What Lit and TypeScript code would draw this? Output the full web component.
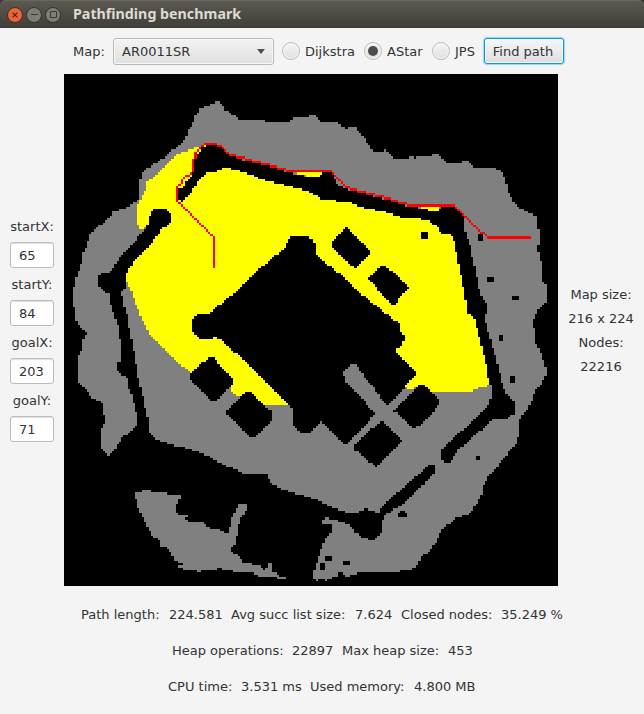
import { LitElement, html, css, svg } from "lit";
import { customElement, property } from "lit/decorators.js";
import { classMap } from "lit/directives/class-map.js";
import { styleMap } from "lit/directives/style-map.js";

const COLS = 216;
const ROWS = 224;
// Outlines are kept on a fine lattice and sampled at every cell centre.
const UNIT_X = 1482 / COLS;
const UNIT_Y = 1536 / ROWS;

const GROUND = `455,84 465,84 480,95 480,108 493,112 515,130 530,138 603,138 605,144 618,148 630,144 672,143 694,130 735,128 737,122 752,122 760,132 767,143 815,145 830,152 845,163 858,160 877,159 883,172 905,198 912,210 932,234 958,234 963,226 968,234 988,252 1035,253 1038,247 1057,252 1062,247 1100,246 1106,240 1124,240 1138,260 1155,267 1190,266 1196,261 1212,262 1228,280 1295,283 1310,288 1325,315 1332,350 1350,385 1372,404 1400,418 1418,428 1420,465 1426,470 1426,508 1420,518 1428,550 1436,580 1437,625 1446,630 1446,685 1425,703 1407,740 1412,775 1413,800 1427,830 1438,860 1446,885 1446,905 1432,930 1418,945 1400,985 1388,1010 1376,1020 1365,1040 1364,1080 1354,1115 1337,1132 1312,1160 1297,1185 1272,1205 1257,1235 1252,1265 1237,1290 1220,1318 1182,1330 1162,1342 1137,1365 1117,1400 1097,1430 1072,1450 1057,1478 1042,1487 1007,1492 882,1495 872,1503 847,1507 840,1500 840,1495 827,1495 820,1507 800,1512 787,1520 780,1516 757,1520 747,1512 748,1495 757,1475 765,1445 774,1420 787,1390 800,1375 800,1350 775,1348 775,1340 787,1330 802,1335 842,1345 867,1360 872,1375 897,1390 917,1398 935,1396 952,1375 954,1338 964,1325 990,1305 1014,1292 1052,1255 1082,1230 1109,1200 1109,1175 1099,1172 1087,1180 1067,1200 1042,1215 1022,1238 982,1270 942,1315 912,1310 907,1303 892,1308 872,1320 842,1312 792,1295 750,1274 700,1260 640,1240 625,1230 610,1210 608,1200 545,1200 520,1188 480,1173 460,1165 440,1148 410,1138 370,1122 335,1116 275,1095 256,1075 252,1028 246,1020 240,975 228,935 220,895 210,830 197,770 190,720 180,695 173,650 185,645 188,615 180,603 190,593 205,570 222,548 240,530 262,508 278,488 290,470 300,460 310,457 322,445 322,418 305,405 275,405 258,415 255,445 240,470 222,488 210,508 190,525 170,545 152,575 137,595 112,600 102,612 102,635 122,653 137,660 140,690 150,720 165,770 170,810 172,858 158,870 160,890 190,915 193,940 205,965 210,990 218,1020 218,1055 205,1070 180,1088 160,1110 155,1125 137,1145 127,1135 110,1122 110,1065 122,1045 122,1025 117,1020 115,988 85,970 42,925 42,845 55,825 58,795 68,775 42,755 35,735 28,680 28,645 35,635 38,605 50,580 55,545 68,515 75,485 100,457 130,440 145,415 190,400 220,380 227,370 227,320 237,292 290,258 320,235 350,207 370,185 372,165 385,155 392,125 410,103 430,94 450,90`;

const SOUTH_WEST = `213,1255 235,1255 238,1248 260,1248 262,1254 308,1254 312,1262 350,1262 345,1282 337,1295 337,1315 350,1322 368,1325 366,1338 380,1344 415,1345 435,1360 465,1367 480,1376 493,1378 503,1330 515,1310 522,1290 553,1290 545,1310 530,1335 520,1370 513,1412 501,1420 505,1435 530,1448 535,1466 590,1475 600,1487 610,1480 612,1467 623,1467 625,1492 643,1500 645,1508 665,1508 665,1514 640,1514 640,1509 592,1507 570,1500 568,1494 515,1492 488,1490 470,1483 430,1490 405,1492 365,1487 345,1480 343,1475 355,1472 345,1464 332,1460 320,1435 305,1420 290,1417 285,1400 265,1385 250,1355 235,1325 225,1310 218,1285`;

const WALLS = [
  // curtain wall from the north-west breach round to the south-east
  `343,375 345,345 358,337 385,300 390,262 400,245 412,225 425,215 455,214 472,222 490,243 540,258 600,273 640,286 690,300 735,308 768,306 775,293 800,295 822,330 840,343 930,367 980,380 1030,397 1060,397 1062,403 1100,410 1115,408 1130,402 1135,398 1172,400 1200,430 1202,465 1212,495 1217,510 1230,570 1240,620 1250,665 1268,690 1268,715 1262,730 1272,770 1283,810 1300,870 1310,915 1325,955 1350,985 1350,1018 1330,1034 1285,1034 1260,1060 1215,1100 1180,1130 1157,1165 1140,1165 1132,1155 1133,1130 1150,1110 1180,1083 1220,1045 1257,1010 1273,995 1280,970 1280,935 1275,925 1270,890 1255,830 1242,775 1232,735 1208,715 1206,690 1200,650 1190,600 1180,550 1172,510 1168,495 1160,480 1130,478 1122,460 1092,440 1060,432 1010,430 960,412 900,402 850,383 775,378 750,360 735,352 650,330 600,318 545,297 515,288 490,283 468,285 455,293 430,296 400,325 380,355 352,382`,
  // keep
  `668,508 672,498 685,488 730,486 745,495 753,510 753,540 800,580 835,605 880,650 930,690 980,730 1005,747 1010,770 1022,785 1022,800 1010,820 990,823 1000,840 1055,890 1055,900 1035,925 1022,940 970,995 960,985 925,935 890,895 882,875 868,868 855,875 838,898 845,920 890,970 933,1018 920,1035 848,1110 840,1110 800,1070 770,1043 740,1075 710,1077 687,1055 685,1005 672,990 650,970 560,880 530,850 468,795 455,790 430,795 405,795 385,775 385,740 400,722 435,718 470,690 520,650 560,608 610,565 665,520`,
  `848,460 920,535 878,582 865,578 800,515 800,505`,
  `960,570 1035,640 990,693 978,685 912,615`,
  `435,850 447,850 507,915 507,930 455,980 443,980 380,915 380,897`,
  `545,955 560,955 625,1015 625,1035 570,1090 558,1090 490,1020 488,1008`,
  `1072,928 1125,975 1125,990 1104,1020 1052,1066 1002,1020 987,1010`,
  `948,1042 960,1042 1015,1100 935,1178 870,1125 872,1115`,
];

const EXPANDED = [
  `420,212 385,225 340,240 300,280 250,325 240,360 228,380 220,395 220,450 228,465 240,465 280,440 230,520 150,600 186,602 188,620 205,660 220,700 240,750 260,785 380,900 440,915 505,930 502,955 525,968 550,985 600,995 670,993 700,850 960,850 1000,900 1020,940 1035,946 1050,944 1070,930 1090,953 1225,953 1245,942 1290,930 1250,770 1220,690 1195,510 1185,470 1100,425 900,380 775,340 650,310 540,275 470,250 430,240 425,218`,
];
const NOTCHES = [
  `690,293 774,293 768,308 738,308 705,300`,
  `1058,397 1132,397 1120,411 1097,411`,
];

// x, y, width, height in cells
const DOTS = [
  [156, 69, 3, 3], [181, 70, 2, 3], [185, 89, 3, 2], [196, 97, 3, 2],
  [190, 114, 2, 3], [195, 132, 2, 3], [180, 167, 2, 2], [147, 191, 2, 1],
  [146, 192, 4, 2], [114, 211, 3, 2], [122, 213, 3, 2], [112, 214, 2, 3],
];

const ROUTE = `65,84 65,71 49,55 49,49 51,47 51,46 56,42 56,37 57,36 57,34 58,33 61,30 66,30 68,31 72,35 74,35 75,36 78,36 79,37 81,37 82,38 85,38 86,39 89,39 90,40 92,40 93,41 96,41 97,42 116,42 122,48 124,49 125,50 127,50 128,51 131,51 132,52 135,52 136,53 139,53 140,54 142,54 143,55 145,55 146,56 149,56 150,57 170,57 182,69 183,69 185,71 203,71`;

type Point = [number, number];
const points = (s: string): Point[] =>
  s.trim().split(/\s+/).map((p) => p.split(",").map(Number) as Point);

const grid = new Uint8Array(COLS * ROWS);

function fill(outline: string, value: number, onlyOver?: number) {
  const poly = points(outline);
  for (let r = 0; r < ROWS; r++) {
    const y = (r + 0.5) * UNIT_Y;
    const xs: number[] = [];
    poly.forEach(([x1, y1], i) => {
      const [x2, y2] = poly[(i + 1) % poly.length];
      if (y1 > y !== y2 > y) xs.push(x1 + ((y - y1) / (y2 - y1)) * (x2 - x1));
    });
    xs.sort((a, b) => a - b);
    for (let k = 0; k + 1 < xs.length; k += 2) {
      for (let c = Math.ceil(xs[k] / UNIT_X - 0.5); (c + 0.5) * UNIT_X < xs[k + 1]; c++) {
        const at = r * COLS + c;
        if (onlyOver === undefined || grid[at] === onlyOver) grid[at] = value;
      }
    }
  }
}

function trace(route: string) {
  const p = points(route);
  for (let i = 0; i + 1 < p.length; i++) {
    const dx = p[i + 1][0] - p[i][0];
    const dy = p[i + 1][1] - p[i][1];
    const n = Math.max(Math.abs(dx), Math.abs(dy));
    for (let s = 0; s <= n; s++) {
      const x = Math.round(p[i][0] + (dx * s) / n);
      const y = Math.round(p[i][1] + (dy * s) / n);
      grid[y * COLS + x] = 3;
    }
  }
}

fill(GROUND, 1);
fill(SOUTH_WEST, 1);
WALLS.forEach((w) => fill(w, 0));
EXPANDED.forEach((e) => fill(e, 2, 1));
NOTCHES.forEach((n) => fill(n, 2));
for (const [x, y, w, h] of DOTS)
  for (let r = y; r < y + h; r++) grid.fill(0, r * COLS + x, r * COLS + x + w);
trace(ROUTE);

function cells(value: number): string {
  let d = "";
  for (let r = 0; r < ROWS; r++) {
    for (let c = 0; c < COLS; ) {
      if (grid[r * COLS + c] !== value) { c++; continue; }
      const from = c;
      while (c < COLS && grid[r * COLS + c] === value) c++;
      d += `M${from} ${r}h${c - from}v1h${from - c}z`;
    }
  }
  return d;
}

@customElement("grid-map")
class GridMap extends LitElement {
  static styles = css`
    :host { display: block; width: 494px; height: 512px; background: #000; }
    svg { display: block; width: 100%; height: 100%; }
    .ground { fill: #808080; }
    .expanded { fill: #ffff00; }
    .route { fill: #ff0000; }
  `;
  render() {
    return html`<svg viewBox="0 0 216 224" preserveAspectRatio="none" shape-rendering="crispEdges">
      ${svg`<path class="ground" d=${cells(1)} /><path class="expanded" d=${cells(2)} /><path class="route" d=${cells(3)} />`}
    </svg>`;
  }
}

@customElement("radio-option")
class RadioOption extends LitElement {
  @property() label = "";
  @property({ type: Boolean }) checked = false;
  static styles = css`
    :host { display: flex; align-items: center; gap: 5px; }
    .ring {
      box-sizing: border-box; width: 18px; height: 18px; border-radius: 50%;
      border: 1px solid #bababa; flex: none;
      background: linear-gradient(#f5f5f5, #dfdfdf);
      display: flex; align-items: center; justify-content: center;
      box-shadow: inset 0 0 0 1px #fafafa;
    }
    .text { padding-top: 2px; }
    .on::after { content: ""; width: 10px; height: 10px; border-radius: 50%; background: #4d4d4d; }
  `;
  render() {
    return html`<span class=${classMap({ ring: true, on: this.checked })}></span><span class="text">${this.label}</span>`;
  }
}

@customElement("app-root")
class AppRoot extends LitElement {
  static styles = css`
    :host {
      display: flex; flex-direction: column; width: 644px; height: 714px;
      background: #f4f4f4; color: #333; overflow: hidden;
      font: 13px/24px "DejaVu Sans", sans-serif; white-space: nowrap;
    }
    .frame { background: #3a3935; height: 28px; flex: none; }
    .title {
      box-sizing: border-box; height: 28px; padding-left: 7px; display: flex; align-items: center;
      background: linear-gradient(#5d5a52, #3e3d38); border-radius: 6px 6px 0 0;
      box-shadow: inset 0 1px 0 #69665e;
    }
    .controls { display: flex; gap: 3px; width: 66px; padding-top: 1px; }
    .controls svg { display: block; width: 16px; height: 16px; }
    .name { font: bold 14.25px/28px "Noto Sans", "Open Sans", sans-serif; color: #dfdbd2; }
    .tools { height: 46px; flex: none; display: flex; align-items: center; padding-left: 73px; }
    .map-label { width: 40px; padding-top: 2px; }
    .combo {
      box-sizing: border-box; width: 161px; height: 27px; border: 1px solid #b9b9b9; border-radius: 3px;
      background: linear-gradient(#f3f3f3, #e0e0e0); box-shadow: inset 0 0 0 1px #f8f8f8;
      display: flex; align-items: center; justify-content: space-between; padding: 0 8px; margin-right: 8px;
    }
    .combo span:first-child { padding-top: 2px; }
    .arrow { width: 0; border: 4.5px solid transparent; border-top: 5px solid #4f4f4f; border-bottom: 0; }
    .dijkstra { width: 82px; }
    .astar { width: 68px; }
    .jps { width: 52px; }
    .find {
      box-sizing: border-box; width: 80px; height: 26px; padding: 1px 2px 0 0; border: 1px solid #039ed3;
      border-radius: 3px; background: linear-gradient(#f6f6f6, #dedede); color: #333; font: inherit;
      line-height: 24px; box-shadow: 0 0 1px 1px #9bd5ea, inset 0 0 0 1px #fafafa;
    }
    .middle { display: flex; height: 512px; flex: none; }
    .left {
      box-sizing: border-box; width: 64px; padding-bottom: 8px;
      display: flex; flex-direction: column; justify-content: center; align-items: center;
    }
    .left label { height: 32px; line-height: 34px; }
    .left input {
      box-sizing: border-box; width: 44px; height: 26px; border: 1px solid #bcbcbc; border-radius: 3px;
      background: #fff; box-shadow: inset 0 1px 1px #e0e0e0; color: #333; font: inherit; padding: 0 0 0 8px;
    }
    .right {
      flex: 1; padding-top: 2px; display: flex; flex-direction: column; justify-content: center; align-items: center;
    }
    .stats { flex: 1; display: flex; flex-direction: column; gap: 12px; padding-top: 17px; align-items: center; }
    .stats div { display: flex; }
  `;
  private coords = [["startX:", "65"], ["startY:", "84"], ["goalX:", "203"], ["goalY:", "71"]];
  private stats: [string, number][][] = [
    [["Path length:", 88], ["224.581", 62], ["Avg succ list size:", 124], ["7.624", 46], ["Closed nodes:", 100], ["35.249 %", 62]],
    [["Heap operations:", 120], ["22897", 50], ["Max heap size:", 106], ["453", 24]],
    [["CPU time:", 73], ["3.531 ms", 69], ["Used memory:", 104], ["4.800 MB", 62]],
  ];
  render() {
    return html`
      <header class="frame"><div class="title">
        <div class="controls">
          <svg viewBox="0 0 16 16"><circle cx="8" cy="8" r="7.5" fill="#ee6434" stroke="#35332f"/><path d="M5.6 5.6l4.8 4.8M10.4 5.6l-4.8 4.8" stroke="#48251a" stroke-width="1.2"/></svg>
          <svg viewBox="0 0 16 16"><circle cx="8" cy="8" r="7.5" fill="#807d76" stroke="#35332f"/><path d="M5 7.5h7" stroke="#3b3934"/></svg>
          <svg viewBox="0 0 16 16"><circle cx="8" cy="8" r="7.5" fill="#807d76" stroke="#35332f"/><path d="M5.5 4.5h6v6h-6z" fill="none" stroke="#3b3934"/></svg>
        </div>
        <span class="name">Pathfinding benchmark</span>
      </div></header>
      <div class="tools">
        <span class="map-label">Map:</span>
        <div class="combo"><span>AR0011SR</span><span class="arrow"></span></div>
        <radio-option class="dijkstra" label="Dijkstra"></radio-option>
        <radio-option class="astar" label="AStar" checked></radio-option>
        <radio-option class="jps" label="JPS"></radio-option>
        <button class="find">Find path</button>
      </div>
      <main class="middle">
        <div class="left">${this.coords.map(([l, v]) => html`<label>${l}</label><input .value=${v} />`)}</div>
        <grid-map></grid-map>
        <div class="right"><span>Map size:</span><span>216 x 224</span><span>Nodes:</span><span>22216</span></div>
      </main>
      <footer class="stats">
        ${this.stats.map((row) => html`<div>${row.map(([t, w]) => html`<span style=${styleMap({ width: w + "px" })}>${t}</span>`)}</div>`)}
      </footer>
    `;
  }
}
